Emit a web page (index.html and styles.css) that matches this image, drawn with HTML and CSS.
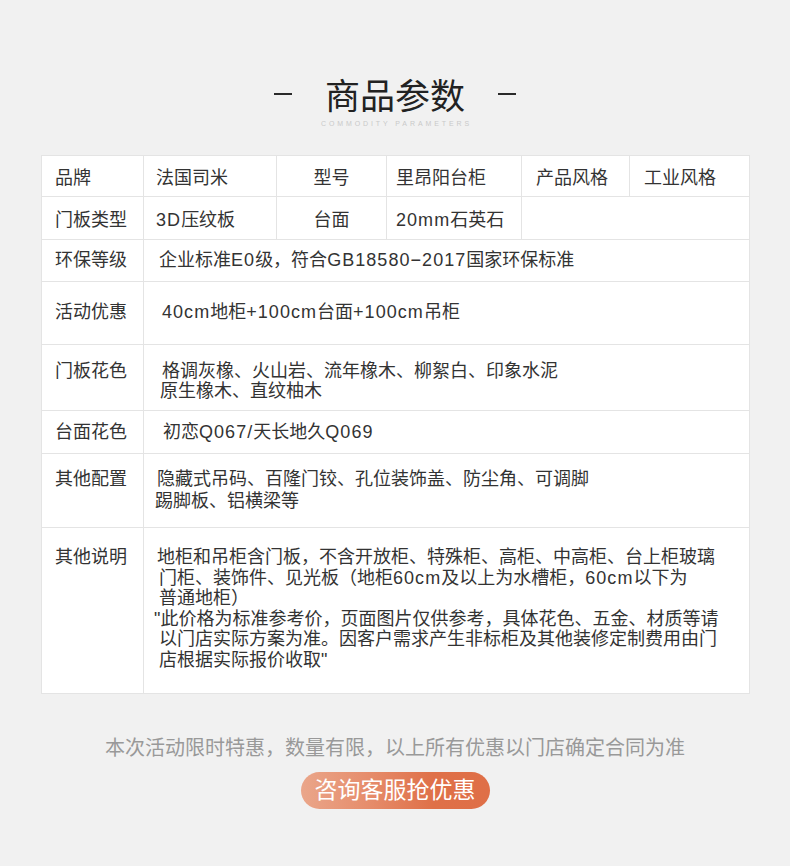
FILE: index.html
```html
<!DOCTYPE html>
<html lang="zh-CN">
<head>
<meta charset="utf-8">
<title>商品参数</title>
<link rel="stylesheet" href="styles.css">
</head>
<body>
<div class="page">
  <header class="head">
    <div class="title-row">
      <span class="dash"></span>
      <h1 class="title">商品参数</h1>
      <span class="dash"></span>
    </div>
    <div class="subtitle">COMMODITY PARAMETERS</div>
  </header>

  <div class="params">
    <div class="cell label r1">品牌</div>
    <div class="cell c2 r1">法国司米</div>
    <div class="cell c3 r1">型号</div>
    <div class="cell c4 r1">里昂阳台柜</div>
    <div class="cell c5 r1">产品风格</div>
    <div class="cell c6 r1">工业风格</div>

    <div class="cell label r2">门板类型</div>
    <div class="cell c2 r2"><span class="lat">3D</span>压纹板</div>
    <div class="cell c3 r2">台面</div>
    <div class="cell c4 r2"><span class="lat">20mm</span>石英石</div>
    <div class="cell span2 r2"></div>

    <div class="cell label r3">环保等级</div>
    <div class="cell value r3"><div class="ln i15">企业标准<span class="lat">E0</span>级，符合<span class="lat">GB18580−2017</span>国家环保标准</div></div>

    <div class="cell label r4">活动优惠</div>
    <div class="cell value r4"><div class="ln i18"><span class="lat">40cm</span>地柜<span class="lat">+100cm</span>台面<span class="lat">+100cm</span>吊柜</div></div>

    <div class="cell label r5">门板花色</div>
    <div class="cell value r5">
      <div class="ln i18">格调灰橡、火山岩、流年橡木、柳絮白、印象水泥</div>
      <div class="ln i16">原生橡木、直纹柚木</div>
    </div>

    <div class="cell label r6">台面花色</div>
    <div class="cell value r6"><div class="ln i19">初恋<span class="lat">Q067/</span>天长地久<span class="lat">Q069</span></div></div>

    <div class="cell label r7">其他配置</div>
    <div class="cell value r7">
      <div class="ln i13">隐藏式吊码、百隆门铰、孔位装饰盖、防尘角、可调脚</div>
      <div class="ln i11">踢脚板、铝横梁等</div>
    </div>

    <div class="cell label r8">其他说明</div>
    <div class="cell value r8">
      <div class="ln i13">地柜和吊柜含门板，不含开放柜、特殊柜、高柜、中高柜、台上柜玻璃</div>
      <div class="ln i15">门柜、装饰件、见光板（地柜<span class="lat">60cm</span>及以上为水槽柜，<span class="lat">60cm</span>以下为</div>
      <div class="ln i15">普通地柜）</div>
      <div class="ln i10">"此价格为标准参考价，页面图片仅供参考，具体花色、五金、材质等请</div>
      <div class="ln i15">以门店实际方案为准。因客户需求产生非标柜及其他装修定制费用由门</div>
      <div class="ln i15">店根据实际报价收取"</div>
    </div>
  </div>

  <p class="notice">本次活动限时特惠，数量有限，以上所有优惠以门店确定合同为准</p>
  <div class="cta-wrap"><a class="cta" href="#">咨询客服抢优惠</a></div>
</div>
</body>
</html>
```

FILE: styles.css
```css
* { box-sizing: border-box; }
html, body {
  margin: 0;
  padding: 0;
  background: #f1f1f1;
}
body {
  font-family: "Liberation Sans", "Noto Sans CJK SC", sans-serif;
  color: #333;
}
.page {
  width: 790px;
  height: 866px;
  padding-top: 74px;
}
.head { text-align: center; }
.title-row {
  display: flex;
  justify-content: center;
  align-items: center;
  height: 40px;
  gap: 33px;
}
.dash {
  display: block;
  width: 18px;
  height: 2px;
  background: #2a2a2a;
}
.title {
  margin: 0;
  font-family: "Noto Sans CJK SC", sans-serif;
  font-size: 35px;
  line-height: 40px;
  font-weight: 400;
  color: #222;
}
.subtitle {
  margin-top: 5px;
  height: 10px;
  line-height: 10px;
  font-family: "Liberation Sans", sans-serif;
  font-size: 7px;
  letter-spacing: 2.9px;
  color: #c9c9c9;
  padding-left: 3px;
}
.params {
  margin: 26px 0 0 41px;
  width: 709px;
  display: grid;
  grid-template-columns: 101px 132px 109px 134px 107px 119px;
  grid-template-rows: 40px 42px 41px 62px 65px 42px 73px 165px;
  gap: 1px;
  padding: 1px;
  background: #e4e4e4;
}
.cell {
  background: #fff;
  font-size: 18px;
  line-height: 21px;
  white-space: nowrap;
}
.lat { letter-spacing: 1.05px; }
.label { padding-left: 13px; }
.c2 { padding-left: 12px; }
.c3 { text-align: center; }
.c4 { padding-left: 9px; }
.c5 { padding-left: 14px; }
.c6 { padding-left: 14px; }
.span2 { grid-column: span 2; }
.value { grid-column: span 5; }
.ln { display: block; }
.i10 { padding-left: 10px; }
.i11 { padding-left: 11px; }
.i13 { padding-left: 13px; }
.i15 { padding-left: 15px; }
.i16 { padding-left: 16px; }
.i18 { padding-left: 18px; }
.i19 { padding-left: 19px; }

.r1 { padding-top: 12px; }
.r2 { padding-top: 13px; }
.r3 { padding-top: 10px; }
.r4 { padding-top: 20px; }
.r5 { padding-top: 16px; line-height: 20px; }
.r6 { padding-top: 11px; }
.r7 { padding-top: 14px; line-height: 22px; }
.r8 { padding-top: 19px; line-height: 20.5px; }

.notice {
  margin: 40px 0 0;
  text-align: center;
  font-size: 20px;
  line-height: 28px;
  color: #999;
}
.cta-wrap {
  display: flex;
  justify-content: center;
  margin-top: 10px;
}
.cta {
  display: block;
  width: 189px;
  height: 37px;
  border-radius: 19px;
  background: linear-gradient(to right, #eaa68a 0%, #e68d6c 35%, #df7048 70%, #df6f47 100%);
  color: #fff;
  text-decoration: none;
  text-align: center;
  font-size: 23px;
  line-height: 37px;
}
```
